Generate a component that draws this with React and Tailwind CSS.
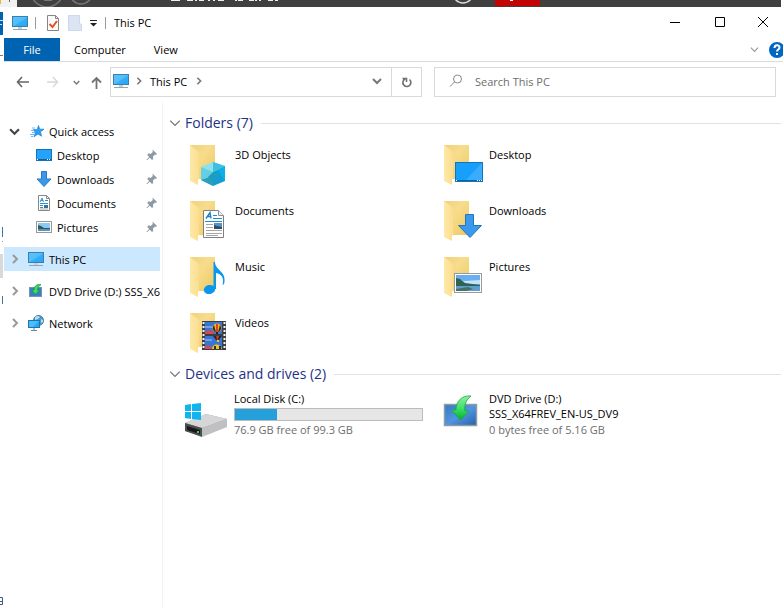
import { clsx } from 'clsx';

const pinned = [
  { label: 'Desktop', icon: DesktopIcon },
  { label: 'Downloads', icon: DownloadIcon },
  { label: 'Documents', icon: DocumentIcon },
  { label: 'Pictures', icon: PictureIcon },
];

const folders = [
  { label: '3D Objects', overlay: CubeArt },
  { label: 'Desktop', overlay: DesktopArt },
  { label: 'Documents', overlay: DocumentArt },
  { label: 'Downloads', overlay: DownloadArt },
  { label: 'Music', overlay: MusicArt },
  { label: 'Pictures', overlay: PictureArt },
  { label: 'Videos', overlay: VideoArt },
];

const drive = { name: 'Local Disk (C:)', free: 76.9, total: 99.3 };

function Chevron({ dir = 'down', size = 9, width = 2, className }) {
  const d = dir === 'down' ? 'M1 3l4 4 4-4' : 'M3 1l4 4-4 4';
  return (
    <svg width={size} height={size} viewBox="0 0 10 10" className={clsx('shrink-0', className)}>
      <path d={d} fill="none" stroke="currentColor" strokeWidth={width} />
    </svg>
  );
}

function MonitorIcon() {
  return (
    <svg width="16" height="16" viewBox="0 0 16 16" className="shrink-0">
      <defs>
        <linearGradient id="screen" x1="0" y1="0" x2="1" y2="1">
          <stop offset="0" stopColor="#5cc4fd" />
          <stop offset="0.5" stopColor="#51bdfa" />
          <stop offset="0.55" stopColor="#33aef8" />
          <stop offset="1" stopColor="#2aa4f4" />
        </linearGradient>
      </defs>
      <rect x="0.5" y="1.5" width="15" height="10" fill="url(#screen)" stroke="#3c7fa8" />
      <path d="M6 12h4v2H6z" fill="#c3d0d8" />
      <path d="M1 14.5h14" stroke="#8fa6b3" />
    </svg>
  );
}

function StarIcon() {
  return (
    <svg width="14" height="16" viewBox="0 0 14 16" className="shrink-0">
      <path
        d="M8.5 2.500l1.200 3.700H14l-3.500 2.600 1 4.400L8 11l-4 2.800 1.500-4.500L3 6.800l4.300-.4z"
        fill="#2b9df4"
        stroke="#1c82d2"
        strokeWidth="0.7"
      />
      <path d="M2 5h3M1 7.500h3M2 9.500h3M0 11.500h4M1 13.500h2" stroke="#6dbcf5" />
    </svg>
  );
}

function DesktopIcon() {
  return (
    <svg width="16" height="16" viewBox="0 0 16 16" className="shrink-0">
      <rect x="0.5" y="2.5" width="15" height="11" fill="#23a3fb" stroke="#1173b8" />
      <path d="M1 12.500h14" stroke="#155f92" />
      <path d="M1 12.500h1M11 12.500h1M13 12.500h1" stroke="#fff" />
    </svg>
  );
}

function DownloadIcon() {
  return (
    <svg width="16" height="16" viewBox="0 0 16 16" className="shrink-0">
      <path d="M5.500.5h5v7.500h4.500L8 15.500 1 8h4.500z" fill="#3a98ea" stroke="#2a7bc6" />
    </svg>
  );
}

function DocumentIcon() {
  return (
    <svg width="16" height="16" viewBox="0 0 16 16" className="shrink-0">
      <path d="M2.500.5h8l3 3v12h-11z" fill="#fff" stroke="#868686" />
      <path d="M10.500.5v3h3" fill="none" stroke="#868686" />
      <path d="M4 7l2-4 1.500 4M5 5.500h2M9 5.500h3M4 8.500h8M4 10.500h3M4 12.500h3" fill="none" stroke="#2f8fce" />
      <path d="M8 10h4v3H8z" fill="#3d6f94" />
      <path d="M4 14h8" stroke="#aaa" />
    </svg>
  );
}

function PictureIcon() {
  return (
    <svg width="16" height="16" viewBox="0 0 16 16" className="shrink-0">
      <rect x="0.5" y="2.5" width="15" height="11" fill="#fff" stroke="#999" />
      <path d="M2 4h12v8H2z" fill="#8ccaf6" />
      <path d="M2 6l3 1 3 2h6v1H2z" fill="#2e5b52" />
      <path d="M2 10h12v2H2z" fill="#5c94bf" />
    </svg>
  );
}

function PinIcon() {
  return (
    <svg width="12" height="12" viewBox="0 0 12 12" className="shrink-0">
      <path
        d="M7 1l4 4-1 1-1-.5-2 2 .2 2.500L6 11 3.800 8.700 1 11.200l-.5-.5L3.200 8 1.200 6 2.500 4.500l2.500.2 2-2L6.200 1.800z"
        fill="#8d99a3"
      />
    </svg>
  );
}

function NetworkIcon() {
  return (
    <svg width="16" height="16" viewBox="0 0 16 16" className="shrink-0">
      <circle cx="10.5" cy="5.5" r="5" fill="#4f98c8" stroke="#3f7ba6" />
      <path d="M7 2c2-1.500 4-1 5 0l-2 2-3 1zM13 4l2 1v2l-2 1z" fill="#b6dcf0" />
      <rect x="0.5" y="5.5" width="11" height="7" fill="#4cbcfa" stroke="#1b75ae" />
      <path d="M11 6v6H5z" fill="#28a5f3" />
      <path d="M6 13v2M3 15.500h6" stroke="#5c8ca8" />
    </svg>
  );
}

function InstallDisc({ size, className }) {
  return (
    <svg width={size} height={size} viewBox="0 0 36 36" className={clsx('shrink-0', className)}>
      <defs>
        <linearGradient id="panel" x1="0" y1="0" x2="1" y2="1">
          <stop offset="0" stopColor="#3678c2" />
          <stop offset="0.5" stopColor="#5095df" />
          <stop offset="1" stopColor="#2860ac" />
        </linearGradient>
        <linearGradient id="arrow" x1="0" y1="0" x2="0" y2="1">
          <stop offset="0" stopColor="#8cf09d" />
          <stop offset="0.5" stopColor="#3fe26c" />
          <stop offset="1" stopColor="#05ad25" />
        </linearGradient>
      </defs>
      <rect x="1.5" y="11.5" width="32" height="21" fill="url(#panel)" stroke="#929ba2" strokeWidth="1.5" />
      <path
        d="M28 3C19 2 13 8 13 17H8.500l9 10 8.500-9h-4c-1-6 1-11 6-15z"
        fill="url(#arrow)"
        stroke="#17a83c"
        strokeWidth="0.8"
      />
    </svg>
  );
}

function SmallInstallDisc() {
  return (
    <svg width="14" height="14" viewBox="0 0 14 14" className="shrink-0">
      <rect x="0.5" y="3.5" width="12" height="9" fill="#3a7dcc" stroke="#7d93aa" />
      <path d="M12 .5C8 0 5 2 5 6H2.500L6.500 10.500 10.500 6H8.500c0-2 1-4 3.500-5.500z" fill="#3fdc62" stroke="#129a33" strokeWidth="0.8" />
    </svg>
  );
}

function CubeArt() {
  return (
    <g>
      <path d="M23 18l12 4-12 6-12-5z" fill="#8be2ef" />
      <path d="M11 23l12 5v14l-12-6z" fill="#62cfe3" />
      <path d="M35 22l-12 6v14l12-5z" fill="#119fd3" />
      <path d="M23 18v10l12-6z" fill="#3fbfe0" />
      <path d="M23 32v10l-12-6z" fill="#2a9fba" />
      <path d="M23 28l6 3-6 6-5-4z" fill="#1d9dc0" />
      <path d="M35 22v15l-7-11z" fill="#0bb0e8" />
    </g>
  );
}

function DesktopArt() {
  return (
    <g>
      <rect x="11.5" y="18.5" width="27" height="19" fill="#17a0fb" stroke="#1177bb" />
      <path d="M38 19v17H22z" fill="#39adfb" />
      <path d="M12 36.500h26" stroke="#0a629f" />
      <path d="M12 36.500h1M33 36.500h1M35 36.500h1M37 36.500h1" stroke="#fff" />
    </g>
  );
}

function DocumentArt() {
  return (
    <g>
      <path d="M13.500 10.500h15l5 5v22h-20z" fill="#fff" stroke="#7f7f7f" />
      <path d="M28.500 10.500v5h5" fill="#eee" stroke="#8f8f8f" />
      <path d="M16 18.500l4-6 1 6M18 16.500h3" fill="none" stroke="#1c7fc4" strokeWidth="1.4" />
      <path d="M23 15.500h4M23 18.500h9M15 21.500h17" stroke="#1c8bd0" />
      <path d="M16 24.500h7M16 27.500h7M16 30.500h16M16 33.500h16M16 35.500h12" stroke="#a5a5a5" />
      <path d="M24 23h8v6h-8z" fill="#5593c6" />
      <path d="M24 25l3 1 5 1v2h-8z" fill="#2e5063" />
    </g>
  );
}

function DownloadArt() {
  return <path d="M21.500 14.500h8v11h8L26 37.500 14.500 25.500h7z" fill="#3a99ec" stroke="#2573b8" />;
}

function MusicArt() {
  return (
    <g fill="#0a97ee">
      <ellipse cx="19.5" cy="33.5" rx="5.8" ry="4.5" transform="rotate(-12 19.5 33.5)" />
      <path d="M23.500 6H25c0 8 11 9 9.500 20-.3 2-1.200 3-2 3 2-7-1-11-6.500-12v16h-2.500z" />
    </g>
  );
}

function PictureArt() {
  return (
    <g>
      <rect x="10.5" y="17.5" width="27" height="19" fill="#fff" stroke="#9a9a9a" />
      <path d="M12 19h24v16H12z" fill="#67aef2" />
      <path d="M12 23l8 2 16-1v4H12z" fill="#c7e2f4" />
      <path d="M12 22l4 1 5 4 15 2v1H12z" fill="#2e6352" />
      <path d="M12 30h24v5H12z" fill="#5e9dcc" />
      <path d="M12 33l12-2 5 2-7 2H12z" fill="#466f6b" />
    </g>
  );
}

function VideoArt() {
  return (
    <g>
      <path d="M12 9h24v29H12z" fill="#3b3f45" />
      <path d="M15 10h17v12H15zM15 24h17v13H15z" fill="#3776d5" />
      <path d="M15 14h9v2h-9zM15 27h7v2h-7z" fill="#6b9fe6" />
      <path d="M15 20l3-2 2 1 2-1 2 4h-9z" fill="#dd4550" />
      <circle cx="27" cy="16" r="4.5" fill="#f0b51d" />
      <path d="M24 13c-2 3-1 5 1 7h1zM30 13c2 3 1 5-1 7h-1z" fill="#3a2b20" />
      <path d="M26 12h2v8h-2z" fill="#d8432a" />
      <path d="M26 20h2v2h-2z" fill="#222" />
      <path d="M23 24h9l-3 4h-3z" fill="#2b2620" />
      <path d="M26 24h3l-1 4h-1z" fill="#c93a27" />
      <path d="M27 28h2v2h-2z" fill="#efc321" />
      <path d="M15 35l3-2 4 3v1h-7z" fill="#dd4550" />
      <path d="M22 37c0-6 9-6 10 0z" fill="#efc321" />
      <path d="M24 34h2v3h-2zM29 34h2v3h-2z" fill="#3a2b20" />
      <path d="M13.500 10v28M34.500 10v28" stroke="#f3f3f3" strokeWidth="2" strokeDasharray="2 2" />
    </g>
  );
}

function Folder({ children }) {
  return (
    <svg width="40" height="44" viewBox="0 0 40 44" className="shrink-0">
      <defs>
        <linearGradient id="back" x1="0" y1="0" x2="1" y2="1">
          <stop offset="0" stopColor="#f1d27c" />
          <stop offset="0.4" stopColor="#f7dc8c" />
          <stop offset="1" stopColor="#edc964" />
        </linearGradient>
        <linearGradient id="flap" x1="0" y1="0" x2="1" y2="0">
          <stop offset="0" stopColor="#ffe9a8" />
          <stop offset="1" stopColor="#fbdd8e" />
        </linearGradient>
      </defs>
      <path d="M0 1h25v34H8z" fill="url(#back)" />
      <path d="M0 1l8 6c1 1 1 2 1 4v23l-1 2v5l-8-4z" fill="url(#flap)" />
      {children}
    </svg>
  );
}

function DiskArt() {
  return (
    <svg width="44" height="36" viewBox="0 0 44 36" className="shrink-0">
      <path d="M1 20l21-9 21 5v7L18 33 1 28z" fill="#9d9d9f" />
      <path d="M1 20l21-9 21 5-25 9z" fill="#d6d6d8" />
      <path d="M18 25l25-9v8L18 34z" fill="#c0c0c3" />
      <path d="M1 20l17 5v9L1 28z" fill="#4c4d50" />
      <path d="M3 23l13 4v4L3 27z" fill="#17181a" />
      <path d="M13 28h2v2h-2z" fill="#35d94a" />
      <path d="M1 2l6-1v7H1zM8 1l9-1v8H8zM1 9h6v7l-6-1zM8 9h9v8l-9-1z" fill="#10b5ef" />
    </svg>
  );
}

function Backdrop() {
  return (
    <div className="mr-[2px] h-[7px] overflow-hidden bg-[#404040]">
      <svg width="560" height="7" viewBox="0 0 560 7">
        <path d="M0 0h17v7H0z" fill="#f1f1f1" />
        <path d="M0 0h1v4H0z" fill="#e9b73a" />
        <path d="M9 0h1v2H9z" fill="#666" />
        <circle cx="47" cy="-9" r="16" fill="none" stroke="#777" strokeWidth="1.5" />
        <path d="M44 .5h8" stroke="#777" />
        <circle cx="81" cy="-7" r="11" fill="none" stroke="#777" strokeWidth="1.5" />
        <path
          d="M171 .5h9M187 .5h6M195 .5h2M199 .5h5M208 .5h2M213 .5h2M218 .5h6M235 .5h2M238 .5h5M249 .5h5M255 .5h2M259 .5h2M268 .5h5M275 .5h3"
          stroke="#eee"
        />
        <circle cx="463" cy="-7" r="10" fill="none" stroke="#ddd" strokeWidth="1.5" />
        <path d="M495 0h45v6h-35l-3 1-4-1h-3z" fill="#c20404" />
        <path d="M510 0h3v1h-3z" fill="#fff" />
      </svg>
    </div>
  );
}

function TitleBar() {
  return (
    <div className="flex h-[31px] items-center pl-2">
      <MonitorIcon />
      <span className="ml-[7px] h-3 w-px bg-[#999]" />
      <button aria-label="Properties" className="ml-[10px]">
        <svg width="14" height="16" viewBox="0 0 14 16">
          <path d="M1.500.5h8l3 3v12h-11z" fill="#fbfbfb" stroke="#858585" />
          <path d="M9.500.5v3h3" fill="none" stroke="#858585" />
          <path d="M3.500 9l3 3L11 6" fill="none" stroke="#e4511f" strokeWidth="2" />
        </svg>
      </button>
      <button aria-label="New folder" className="ml-2">
        <svg width="14" height="16" viewBox="0 0 14 16">
          <path d="M.5.5h11v8l2 1v6H.5z" fill="#dbe4f3" stroke="#ccd8eb" />
        </svg>
      </button>
      <button aria-label="Customize Quick Access Toolbar" className="ml-2">
        <svg width="8" height="8" viewBox="0 0 8 8">
          <path d="M0 1.500h7" stroke="#222" />
          <path d="M0 4h7L3.500 7.500z" fill="#222" />
        </svg>
      </button>
      <span className="ml-[7px] h-3 w-px bg-[#999]" />
      <h1 className="ml-2">This PC</h1>
      <div className="ml-auto flex h-full pb-[2px]">
        <button aria-label="Minimize" className="flex w-[45px] items-center justify-center">
          <svg width="10" height="10" viewBox="0 0 10 10">
            <path d="M0 5.500h10" stroke="#000" />
          </svg>
        </button>
        <button aria-label="Maximize" className="flex w-[45px] items-center justify-center">
          <svg width="10" height="10" viewBox="0 0 10 10">
            <path d="M.5.5h9v9h-9z" fill="none" stroke="#000" />
          </svg>
        </button>
        <button aria-label="Close" className="flex w-[41px] items-center justify-center">
          <svg width="10" height="10" viewBox="0 0 10 10">
            <path d="M0 0l10 10M10 0L0 10" stroke="#000" />
          </svg>
        </button>
      </div>
    </div>
  );
}

function Ribbon() {
  return (
    <div className="flex h-6 items-stretch border-b border-[#dadbdc]">
      <button className="w-14 bg-[#0063b1] text-white">File</button>
      <button className="ml-[14px]">Computer</button>
      <button className="ml-7">View</button>
      <button aria-label="Expand the Ribbon" className="ml-auto text-[#999]">
        <Chevron width={1.3} />
      </button>
      <button aria-label="Help" className="ml-[10px] self-center overflow-hidden">
        <svg width="14" height="16" viewBox="0 0 14 16">
          <circle cx="8" cy="8" r="8" fill="#0067c5" />
          <path d="M5.500 6c0-3.500 5-3.500 5-.5C10.500 7.500 8 7.500 8 9.500M8 11v2" fill="none" stroke="#fff" strokeWidth="2" />
        </svg>
      </button>
    </div>
  );
}

function AddressBar() {
  return (
    <div className="flex items-center py-[5px] pr-[7px] pl-3 text-[#777]">
      <button aria-label="Back">
        <svg width="13" height="12" viewBox="0 0 13 12">
          <path d="M6 1L1.500 6 6 11M1.500 6H13" fill="none" stroke="#666" strokeWidth="1.6" />
        </svg>
      </button>
      <button aria-label="Forward" className="ml-[18px]">
        <svg width="12" height="12" viewBox="0 0 12 12">
          <path d="M6 1l4.500 5L6 11M0 6h10.500" fill="none" stroke="#d8d8d8" strokeWidth="1.5" />
        </svg>
      </button>
      <button aria-label="Recent locations" className="ml-[14px]">
        <Chevron size={7} />
      </button>
      <button aria-label="Up" className="ml-[11px]">
        <svg width="11" height="13" viewBox="0 0 11 13">
          <path d="M1 6.500L5.500 2 10 6.500M5.500 2v11" fill="none" stroke="#737373" strokeWidth="1.8" />
        </svg>
      </button>
      <div className="ml-2 flex h-[30px] flex-1 items-center border border-[#d9d9d9] pb-[2px] pl-[2px]">
        <MonitorIcon />
        <Chevron dir="right" size={8} className="ml-[6px]" />
        <span className="ml-[7px] text-black">This PC</span>
        <Chevron dir="right" size={8} className="ml-2" />
        <button aria-label="Previous locations" className="mr-[9px] ml-auto">
          <Chevron size={10} />
        </button>
        <button
          aria-label="Refresh"
          className="-mb-[2px] flex w-[30px] items-center justify-center self-stretch border-l border-[#d9d9d9]"
        >
          <svg width="12" height="12" viewBox="0 0 12 12">
            <path d="M8.500 3.500A4 4 0 1 1 4 3M1.500 2.500h4V6" fill="none" stroke="#6e6e6e" strokeWidth="1.6" />
          </svg>
        </button>
      </div>
      <label className="ml-3 flex h-[30px] w-[45%] items-center border border-[#d9d9d9] pb-[2px] pl-[14px]">
        <svg width="14" height="14" viewBox="0 0 14 14" className="shrink-0">
          <circle cx="8.5" cy="5" r="4" fill="none" stroke="#888" />
          <path d="M5.500 8L1 12.500" stroke="#888" />
        </svg>
        <input
          type="text"
          aria-label="Search This PC"
          placeholder="Search This PC"
          className="ml-3 min-w-0 flex-1 outline-none placeholder:text-[#6d6d6d]"
        />
      </label>
    </div>
  );
}

function NavRow({ label, icon, active }) {
  return (
    <a
      href="#"
      className={clsx('mt-2 flex h-6 items-center overflow-hidden pl-[6px] whitespace-nowrap', active && 'bg-[#cce8ff]')}
    >
      <Chevron dir="right" size={10} className="text-[#999]" />
      <span className="ml-2 flex w-4 shrink-0 justify-center">{icon}</span>
      <span className="ml-[5px]">{label}</span>
    </a>
  );
}

function Sidebar() {
  return (
    <nav className="w-[159px] shrink-0 border-r border-[#f3f3f3] pt-[17px] pr-[2px]">
      <a href="#" className="flex h-6 items-center pl-[5px]">
        <Chevron size={11} className="text-[#444]" />
        <span className="ml-[10px]">
          <StarIcon />
        </span>
        <span className="ml-[5px]">Quick access</span>
      </a>
      {pinned.map(({ label, icon: Icon }) => (
        <a key={label} href="#" className="flex h-6 items-center pr-[2px] pl-8">
          <Icon />
          <span className="ml-[5px] flex-1">{label}</span>
          <PinIcon />
        </a>
      ))}
      <NavRow label="This PC" icon={<MonitorIcon />} active />
      <NavRow label="DVD Drive (D:) SSS_X64FREV_EN-US_DV9" icon={<SmallInstallDisc />} />
      <NavRow label="Network" icon={<NetworkIcon />} />
    </nav>
  );
}

function GroupHeading({ children }) {
  return (
    <div className="flex h-5 items-center">
      <Chevron size={12} width={1.1} className="text-[#777]" />
      <h2 className="ml-1 text-[14px] leading-5 text-[#1e3287]">{children}</h2>
      <span className="ml-2 h-px flex-1 bg-[#e2e2e2]" />
    </div>
  );
}

export default function App() {
  const used = (1 - drive.free / drive.total) * 100;

  return (
    <div className="flex min-h-screen flex-col bg-white font-['Open_Sans',sans-serif] text-[11px] leading-[15px] text-black">
      <Backdrop />
      <div className="flex flex-1">
        <div className="flex w-1 flex-col justify-between pt-[5px]">
          <svg width="3" height="320" viewBox="0 0 3 320">
            <path d="M0 0h3v23H0z" fill="#0063b1" />
            <path d="M0 8.500h3M0 12.500h2" stroke="#cfe0ef" />
            <path d="M0 43.500h3" stroke="#777" />
            <path d="M2.500 215v10M2.500 284v8" stroke="#3c77a4" />
            <path d="M2 229h1v1H2z" fill="#999" />
            <path d="M0 242h3v24H0z" fill="#d9d9d9" />
          </svg>
          <svg width="3" height="10" viewBox="0 0 3 10">
            <path d="M0 .5h2.500v7H0M0 4.500h2" fill="none" stroke="#3c5a84" />
          </svg>
        </div>
        <div className="flex min-w-0 flex-1 flex-col">
          <TitleBar />
          <Ribbon />
          <AddressBar />
          <div className="flex flex-1">
            <Sidebar />
            <main className="min-w-0 flex-1 pt-[11px] pr-[2px] pl-[6px]">
              <GroupHeading>Folders (7)</GroupHeading>
              <ul className="mt-[9px] grid grid-cols-[254px_1fr] pl-[21px]">
                {folders.map(({ label, overlay: Overlay }) => (
                  <li key={label} className="flex h-14 gap-[5px] pt-[2px]">
                    <Folder>
                      <Overlay />
                    </Folder>
                    <span className="pt-[3px]">{label}</span>
                  </li>
                ))}
              </ul>
              <div className="-mt-[2px]">
                <GroupHeading>Devices and drives (2)</GroupHeading>
              </div>
              <ul className="mt-[7px] grid grid-cols-[259px_1fr] pl-[15px]">
                <li className="flex">
                  <span className="pt-3">
                    <DiskArt />
                  </span>
                  <div className="ml-[6px] w-[189px]">
                    <p>{drive.name}</p>
                    <div className="mt-[2px] mb-px h-[13px] border border-[#bcbcbc] bg-[#e6e6e6]">
                      <div className="h-full bg-[#26a0da]" style={{ width: `${used}%` }} />
                    </div>
                    <p className="text-[#6d6d6d]">
                      {drive.free} GB free of {drive.total} GB
                    </p>
                  </div>
                </li>
                <li className="flex">
                  <span className="pt-[2px]">
                    <InstallDisc size={36} />
                  </span>
                  <div className="ml-[10px]">
                    <p>DVD Drive (D:)</p>
                    <p>SSS_X64FREV_EN-US_DV9</p>
                    <p className="mt-px text-[#6d6d6d]">0 bytes free of 5.16 GB</p>
                  </div>
                </li>
              </ul>
            </main>
          </div>
        </div>
      </div>
    </div>
  );
}
